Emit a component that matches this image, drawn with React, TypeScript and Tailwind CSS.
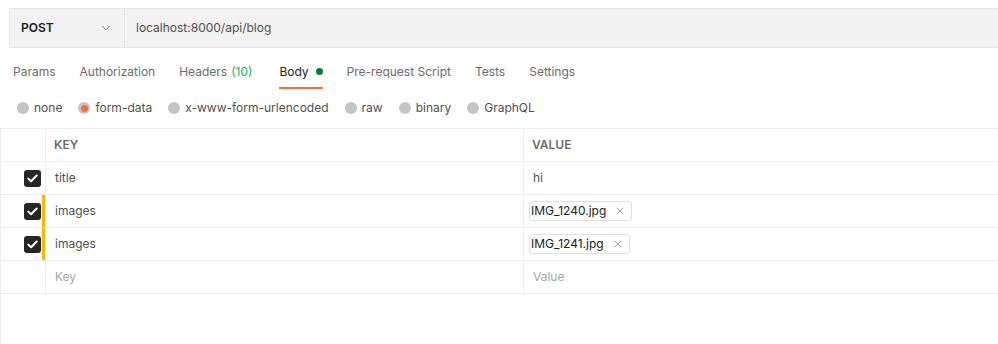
import { ChevronDown, X } from 'lucide-react';

const tabs = [
  { label: 'Params' },
  { label: 'Authorization' },
  { label: 'Headers', count: '(10)' },
  { label: 'Body', active: true },
  { label: 'Pre-request Script' },
  { label: 'Tests' },
  { label: 'Settings' },
];

const bodyTypes = ['none', 'form-data', 'x-www-form-urlencoded', 'raw', 'binary', 'GraphQL'];

const rows = [
  { key: 'title', value: 'hi', files: false },
  { key: 'images', value: 'IMG_1240.jpg', files: true },
  { key: 'images', value: 'IMG_1241.jpg', files: true },
];

function Checkbox() {
  return (
    <div className="w-[17px] h-[17px] rounded-[3px] bg-[#262626] flex items-center justify-center">
      <svg width="11" height="9" viewBox="0 0 11 9" fill="none">
        <path d="M1.3 4.6 L4.1 7.3 L9.7 1.5" stroke="white" strokeWidth="2" strokeLinecap="round" strokeLinejoin="round" />
      </svg>
    </div>
  );
}

export default function App() {
  return (
    <div className="w-[998px] h-[344px] bg-white overflow-hidden text-[12px] text-[#505050]" style={{ fontFamily: 'Inter, "Noto Sans", sans-serif' }}>
      <div className="pt-2 pl-[9px]">
        <div className="flex h-10 bg-[#f2f2f2] border-y border-l border-[#e6e6e6] rounded-l-[3px]">
          <div className="w-[115px] flex items-center justify-between pl-[11px] pr-[11px] border-r border-[#e6e6e6]">
            <span className="font-semibold text-[#212121]">POST</span>
            <ChevronDown size={14} strokeWidth={1.5} className="text-[#6b6b6b]" />
          </div>
          <div className="flex items-center pl-[11px] text-[#505050]">localhost:8000/api/blog</div>
        </div>
      </div>

      <div className="flex pl-[13px] gap-6 h-[41px] items-stretch">
        {tabs.map((t) => (
          <div key={t.label} className={`relative flex items-center pt-[6px] ${t.count ? 'pr-[3px]' : ''}`}>
            <span className={t.active ? 'text-[#212121]' : 'text-[#6b6b6b]'}>{t.label}</span>
            {t.count && <span className="ml-[4px] text-[#0cbb52]">{t.count}</span>}
            {t.active && <span className="ml-[7px] w-[7px] h-[7px] rounded-full bg-[#007f31]" />}
            {t.active && <span className="absolute left-0 right-0 bottom-[0px] h-[2px] bg-[#ff6c37]" />}
          </div>
        ))}
      </div>

      <div className="flex items-center pl-[17px] pb-[1px] gap-4 h-[39px]">
        {bodyTypes.map((b) => (
          <div key={b} className="flex items-center gap-[5px]">
            <span className="w-3 h-3 rounded-full bg-[#c4c4c4] flex items-center justify-center">
              {b === 'form-data' && <span className="w-[7px] h-[7px] rounded-full bg-[#ff6c37]" />}
            </span>
            <span className="text-[#505050]">{b}</span>
          </div>
        ))}
      </div>

      <div className="border-l border-[#ededed] h-[300px]">
        <div className="grid grid-cols-[45px_478px_1fr] h-[34px] border-y border-[#ededed] font-semibold text-[12px] text-[#6b6b6b]">
          <div className="border-r border-[#ededed]" />
          <div className="flex items-center pl-2 border-r border-[#ededed]">KEY</div>
          <div className="flex items-center pl-2">VALUE</div>
        </div>
        {rows.map((r, i) => (
          <div key={i} className="grid grid-cols-[45px_478px_1fr] h-[33px] border-b border-[#ededed]">
            <div className="flex items-center justify-between pl-[23px] border-r border-[#ededed]">
              <Checkbox />
              {r.files ? <span className="w-[3px] h-full bg-[#ffb400]" /> : <span />}
            </div>
            <div className="flex items-center pl-[9px] border-r border-[#ededed] text-[#505050]">{r.key}</div>
            <div className="flex items-center pl-[5px]">
              {r.files ? (
                <span className="flex items-center gap-[8px] h-5 pl-[1px] pr-[5px] border border-[#e0e0e0] rounded-[3px] text-[#212121]">
                  {r.value}
                  <X size={12} strokeWidth={1.3} className="text-[#6b6b6b]" />
                </span>
              ) : (
                <span className="pl-[4px] text-[#505050]">{r.value}</span>
              )}
            </div>
          </div>
        ))}
        <div className="grid grid-cols-[45px_478px_1fr] h-[33px] border-b border-[#ededed] text-[#a6a6a6]">
          <div className="border-r border-[#ededed]" />
          <div className="flex items-center pl-[9px] border-r border-[#ededed]">Key</div>
          <div className="flex items-center pl-[9px]">Value</div>
        </div>
      </div>
    </div>
  );
}
